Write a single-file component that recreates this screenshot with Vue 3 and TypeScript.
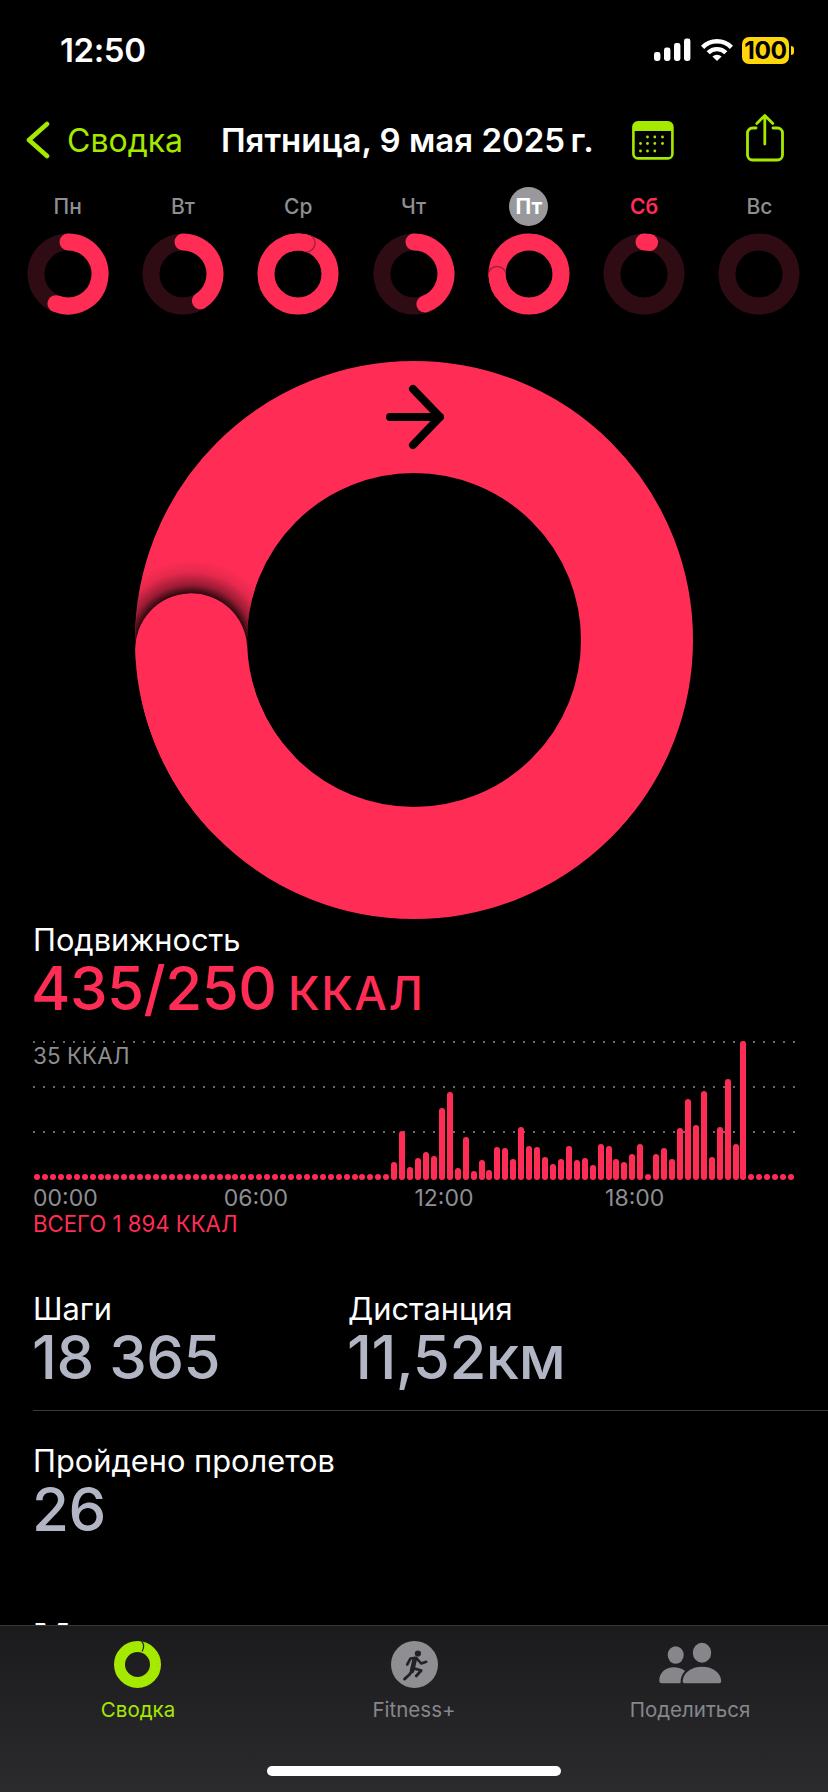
<template>
  <div class="page">
    <div class="status">
      <span class="time">12:50</span>
      <div class="status-icons">
        <svg width="38" height="24" viewBox="0 0 38 24" fill="#fff">
          <rect x="0" y="14" width="6.4" height="9" rx="2.4" />
          <rect x="10" y="9.5" width="6.4" height="13.5" rx="2.4" />
          <rect x="20" y="5" width="6.4" height="18" rx="2.4" />
          <rect x="30" y="0.5" width="6.4" height="22.5" rx="2.4" />
        </svg>
        <svg width="34" height="26" viewBox="-17 -24 34 26" fill="none" stroke="#fff" stroke-width="4.4">
          <path d="M-14.4 -13.6A20 20 0 0 1 14.4 -13.6" />
          <path d="M-8.8 -8.2A12.4 12.4 0 0 1 8.8 -8.2" />
          <path d="M-4.6 -4.4L0 0L4.6 -4.4A6.6 6.6 0 0 0 -4.6 -4.4Z" fill="#fff" stroke="none" />
        </svg>
        <div class="battery"><span class="battery-text">100</span><i class="battery-nub"></i></div>
      </div>
    </div>

    <div class="nav">
      <div class="back">
        <svg width="26" height="38" viewBox="0 0 26 38" fill="none" stroke="#a5e800" stroke-width="4.6" stroke-linecap="round" stroke-linejoin="round">
          <path d="M22 3L4 19L22 35" />
        </svg>
        <span>Сводка</span>
      </div>
      <span class="title">Пятница, 9 мая 2025&#8201;г.</span>
      <svg class="calendar" width="42" height="39" viewBox="0 0 42 39">
        <rect x="1.4" y="1.4" width="39" height="36" rx="4.5" fill="none" stroke="#a5e800" stroke-width="2.6" />
        <path d="M1 6A5 5 0 0 1 6 1H36A5 5 0 0 1 41 6V10H1Z" fill="#a5e800" />
        <g fill="#a5e800">
          <circle v-for="d in calendarDots" :key="d[0] + '-' + d[1]" :cx="d[0]" :cy="d[1]" r="1.4" />
        </g>
      </svg>
      <svg class="share" width="38" height="48" viewBox="0 0 38 48" fill="none" stroke="#a5e800" stroke-width="2.8" stroke-linecap="round" stroke-linejoin="round">
        <path d="M10 14H6.5A5 5 0 0 0 1.500 19V41A5 5 0 0 0 6.500 46H31.500A5 5 0 0 0 36.500 41V19A5 5 0 0 0 31.500 14H27" />
        <path d="M18.800 30V2M10.800 9.500L18.800 1.500L26.800 9.500" />
      </svg>
    </div>

    <div class="week">
      <div v-for="day in days" :key="day.label" class="day">
        <span class="day-label" :class="{ today: day.label === 'Пт', next: day.label === 'Сб' }">{{ day.label }}</span>
        <svg class="day-ring" width="82" height="82" viewBox="-41 -41 82 82" fill="none">
          <defs>
            <clipPath :id="'band-' + day.id">
              <path :d="donut(40.500, 23.500)" clip-rule="evenodd" />
            </clipPath>
          </defs>
          <circle r="32" stroke="#2f0c13" stroke-width="17" />
          <template v-if="day.angle > 360">
            <circle r="32" stroke="#ff2d55" stroke-width="17" />
            <circle :cx="point(32, day.angle)[0]" :cy="point(32, day.angle)[1]" r="10" fill="#a81e3c" :clip-path="'url(#band-' + day.id + ')'" />
            <path :d="arc(32, day.angle - 30, day.angle)" stroke="#ff2d55" stroke-width="17" stroke-linecap="round" />
          </template>
          <path v-else-if="day.angle > 0" :d="arc(32, 0, day.angle)" stroke="#ff2d55" stroke-width="17" stroke-linecap="round" />
        </svg>
      </div>
    </div>

    <svg class="big-ring" width="558" height="558" viewBox="-279 -279 558 558" fill="none">
      <defs>
        <clipPath id="big-band">
          <path :d="donut(279, 167)" clip-rule="evenodd" />
        </clipPath>
        <radialGradient id="head-shadow" gradientUnits="userSpaceOnUse" :cx="bigHead[0]" :cy="bigHead[1]" r="90">
          <stop offset="0.62" stop-color="#000" stop-opacity="0.85" />
          <stop offset="0.72" stop-color="#000" stop-opacity="0.4" />
          <stop offset="0.86" stop-color="#000" stop-opacity="0.1" />
          <stop offset="1" stop-color="#000" stop-opacity="0" />
        </radialGradient>
      </defs>
      <circle r="223" stroke="#ff2d55" stroke-width="112" />
      <circle :cx="bigHead[0]" :cy="bigHead[1]" r="90" fill="url(#head-shadow)" clip-path="url(#big-band)" />
      <path :d="arc(223, bigAngle - 40, bigAngle)" stroke="#ff2d55" stroke-width="112" stroke-linecap="round" />
      <path d="M-24 -223H26M-1 -251L26 -223L-1 -195" stroke="#000" stroke-width="8" stroke-linecap="round" stroke-linejoin="round" />
    </svg>

    <section class="move">
      <div class="metric-name">Подвижность</div>
      <div class="move-value">435/250 <span class="move-unit">ККАЛ</span></div>

      <div class="chart">
        <i class="grid-line"></i>
        <i class="grid-line"></i>
        <i class="grid-line"></i>
        <span class="chart-max">35 ККАЛ</span>
        <div class="bars">
          <i v-for="(v, i) in bars" :key="i" class="bar" :style="{ height: Math.max(v, 6) + 'px' }"></i>
        </div>
      </div>
      <div class="hours">
        <span v-for="h in hours" :key="h">{{ h }}</span>
      </div>
      <div class="total">ВСЕГО 1 894 ККАЛ</div>
    </section>

    <section class="stats">
      <div class="stat steps">
        <div class="metric-name">Шаги</div>
        <div class="stat-value">18 365</div>
      </div>
      <div class="stat">
        <div class="metric-name">Дистанция</div>
        <div class="stat-value">11,52<span class="stat-unit">км</span></div>
      </div>
    </section>
    <div class="divider"></div>
    <section class="flights">
      <div class="metric-name">Пройдено пролетов</div>
      <div class="stat-value">26</div>
    </section>
    <h2 class="next-heading">Минуты</h2>

    <div class="tabbar">
      <div class="tab active">
        <div class="tab-icon">
          <svg class="summary-icon" width="47" height="47" viewBox="-23.500 -23.500 47 47" fill="none">
            <circle r="18" stroke="#a5e800" stroke-width="11" />
            <path d="M4 -23.500Q8 -19 4.500 -13" stroke="#24292a" stroke-width="1.200" />
          </svg>
        </div>
        <span>Сводка</span>
      </div>
      <div class="tab">
        <div class="tab-icon">
          <svg width="47" height="47" viewBox="0 0 47 47" fill="none">
            <circle cx="23.500" cy="23.500" r="23.500" fill="#8e8e93" />
            <circle cx="26.900" cy="12.500" r="3.100" fill="#222224" />
            <g stroke="#222224" stroke-linecap="round" stroke-linejoin="round">
              <path d="M16.200 23.500L19.500 17.500L25.200 16.800L30.200 22.500L35.200 20.800" stroke-width="2.600" />
              <path d="M23.800 18L21 30" stroke-width="4.600" />
              <path d="M20.900 30.100L18.500 33.500L13.500 38.100" stroke-width="2.800" />
              <path d="M21.900 27.200L30.200 29.500L25.200 35" stroke-width="2.800" />
            </g>
          </svg>
        </div>
        <span>Fitness+</span>
      </div>
      <div class="tab">
        <div class="tab-icon">
          <svg width="64" height="48" viewBox="18 10 64 48" fill="#86868b">
            <ellipse cx="35.700" cy="25" rx="8" ry="8.800" />
            <ellipse cx="62" cy="22.700" rx="9.200" ry="10" />
            <path d="M19.300 50.500C19.300 42.500 26 37.300 33.500 37.300C38 37.300 42 38.500 45 41C42 44 40.500 48 40.500 53.300H22C20 53.300 19.300 52.300 19.300 50.500Z" />
            <path d="M42.700 51C43 43 51 36.700 62 36.700C73 36.700 81 43 81.200 51C81.200 52.500 80.200 53.300 78.800 53.300H45C43.500 53.300 42.700 52.500 42.700 51Z" />
          </svg>
        </div>
        <span>Поделиться</span>
      </div>
      <i class="home-bar"></i>
    </div>
  </div>
</template>

<script setup lang="ts">
type Day = { id: string; label: string; angle: number }

const days: Day[] = [
  { id: 'mon', label: 'Пн', angle: 202 },
  { id: 'tue', label: 'Вт', angle: 147 },
  { id: 'wed', label: 'Ср', angle: 374 },
  { id: 'thu', label: 'Чт', angle: 160 },
  { id: 'fri', label: 'Пт', angle: 627 },
  { id: 'sat', label: 'Сб', angle: 10 },
  { id: 'sun', label: 'Вс', angle: 0 },
]

const hours = ['00:00', '06:00', '12:00', '18:00']

const active = [
  18, 49, 13, 22, 28, 24, 72, 88, 12, 43, 9, 20, 10, 33, 32, 21, 53, 34, 33, 23, 16, 21, 34,
  20, 22, 15, 36, 34, 21, 18, 26, 36, 0, 26, 32, 21, 52, 81, 55, 89, 23, 53, 101, 36, 139,
]
const bars: number[] = [...new Array(45).fill(0), ...active, ...new Array(6).fill(0)]

const calendarDots: number[][] = [
  [15.500, 16], [22.800, 16], [30.500, 16],
  [8.500, 22.500], [15.500, 22.500], [22.800, 22.500], [30.500, 22.500],
  [8.500, 30], [15.500, 30], [22.800, 30],
]

const bigAngle = 267.600

function point(r: number, deg: number): number[] {
  const rad = (deg * Math.PI) / 180
  return [r * Math.sin(rad), -r * Math.cos(rad)]
}

function arc(r: number, from: number, to: number): string {
  const a = point(r, from)
  const b = point(r, to)
  const large = to - from > 180 ? 1 : 0
  return `M${a[0]} ${a[1]}A${r} ${r} 0 ${large} 1 ${b[0]} ${b[1]}`
}

function donut(outer: number, inner: number): string {
  const ring = (r: number) => `M${-r} 0A${r} ${r} 0 1 0 ${r} 0A${r} ${r} 0 1 0 ${-r} 0Z`
  return ring(outer) + ring(inner)
}

const bigHead = point(223, bigAngle)
</script>

<style scoped>
.page {
  position: relative;
  width: 828px;
  height: 1792px;
  overflow: hidden;
  background: #000;
  color: #fff;
  font-family: Inter, "Liberation Sans", sans-serif;
}

.status {
  display: flex;
  justify-content: space-between;
  align-items: center;
  height: 100px;
  padding: 0 39px 0 60px;
  box-sizing: border-box;
}

.time {
  font-size: 33px;
  font-weight: 600;
  letter-spacing: -0.4px;
}

.status-icons {
  display: flex;
  align-items: center;
  gap: 8px;
}

.battery {
  position: relative;
  width: 47px;
  height: 27px;
  border-radius: 7px;
  background: #ffd60a;
  color: #000;
  display: flex;
  align-items: center;
  justify-content: center;
}

.battery-text {
  font-size: 24.500px;
  font-weight: 700;
  letter-spacing: -0.3px;
}

.battery-nub {
  position: absolute;
  right: -5px;
  top: 9px;
  width: 3px;
  height: 9px;
  border-radius: 0 3px 3px 0;
  background: #ffd60a;
}

.nav {
  display: flex;
  align-items: center;
  height: 80px;
  padding-left: 25px;
}

.back {
  display: flex;
  align-items: center;
  gap: 16px;
  width: 196px;
  color: #a5e800;
  font-size: 32px;
}

.title {
  width: 411px;
  font-size: 33px;
  font-weight: 600;
  white-space: nowrap;
}

.calendar {
  margin-right: 72px;
}

.share {
  margin-top: -4px;
}

.week {
  display: grid;
  grid-template-columns: repeat(7, 115.300px);
  padding: 7px 0 0 10px;
}

.day {
  display: flex;
  flex-direction: column;
  align-items: center;
  gap: 7px;
}

.day-label {
  width: 39px;
  height: 39px;
  line-height: 39px;
  border-radius: 50%;
  text-align: center;
  color: #8e8e93;
  font-size: 21px;
  font-weight: 500;
}

.day-label.today {
  background: #98989d;
  color: #fff;
  font-weight: 700;
}

.day-label.next {
  color: #ff2d55;
  font-weight: 600;
}

.day-ring {
  display: block;
}

.big-ring {
  display: block;
  margin: 46px auto 0;
}

.move {
  padding: 3px 0 0 33px;
}

.metric-name {
  height: 36px;
  line-height: 36px;
  font-size: 30.800px;
}

.move-value {
  height: 60px;
  line-height: 60px;
  margin-left: -2px;
  color: #ff2d55;
  font-size: 60px;
  font-weight: 500;
  letter-spacing: -0.5px;
  word-spacing: -4px;
}

.move-unit {
  font-size: 46px;
  letter-spacing: 1.500px;
}

.chart {
  position: relative;
  height: 139.500px;
  margin-top: 22.500px;
}

.grid-line {
  position: absolute;
  left: 0;
  width: 764px;
  height: 2px;
  background: repeating-linear-gradient(90deg, #6a6a6e 0 2px, transparent 2px 10px);
}

.grid-line:nth-child(1) {
  top: 0;
}

.grid-line:nth-child(2) {
  top: 45px;
}

.grid-line:nth-child(3) {
  top: 90px;
}

.chart-max {
  position: absolute;
  left: 0;
  top: 2px;
  line-height: 26px;
  color: #8e8e93;
  font-size: 22.500px;
}

.bars {
  position: absolute;
  left: 1px;
  bottom: 0;
  display: flex;
  align-items: flex-end;
  gap: 1.940px;
}

.bar {
  display: block;
  width: 6px;
  flex: none;
  border-radius: 3px;
  background: #ff2d55;
}

.hours {
  display: grid;
  grid-template-columns: repeat(4, 190.700px);
  margin-top: 5px;
  height: 26px;
  line-height: 26px;
  color: #8e8e93;
  font-size: 23px;
}

.total {
  height: 26px;
  line-height: 26px;
  color: #ff2d55;
  font-size: 22.200px;
}

.stats {
  display: flex;
  padding: 54px 0 0 33px;
}

.steps {
  width: 315px;
}

.stat-value {
  height: 60px;
  line-height: 60px;
  margin-left: -1px;
  color: #b2b6c4;
  font-size: 60px;
  font-weight: 500;
  letter-spacing: -0.5px;
}

.stat-unit {
  font-size: 60px;
}

.divider {
  height: 1px;
  margin: 23px 0 0 33px;
  background: #3a3a3c;
}

.flights {
  padding: 32px 0 0 33px;
}

.next-heading {
  margin: 75px 0 0 33px;
  line-height: 48px;
  font-size: 40px;
  font-weight: 700;
}

.tabbar {
  position: absolute;
  left: 0;
  right: 0;
  bottom: 0;
  height: 167px;
  display: grid;
  grid-template-columns: repeat(3, 276px);
  box-sizing: border-box;
  border-top: 1px solid #38383a;
  background: linear-gradient(180deg, #1b1b1d 0%, #2b2b2e 100%);
}

.tab {
  display: flex;
  flex-direction: column;
  align-items: center;
  color: #86868b;
  font-size: 20.500px;
}

.tab.active {
  color: #a5e800;
}

.tab-icon {
  display: flex;
  align-items: center;
  justify-content: center;
  height: 48px;
  margin: 14px 0 9px;
}

.summary-icon {
  margin-left: -2px;
}

.home-bar {
  position: absolute;
  left: 267px;
  top: 140px;
  width: 294px;
  height: 10px;
  border-radius: 5px;
  background: #fff;
}
</style>

<style>
html,
body {
  margin: 0;
  background: #000;
}
</style>
